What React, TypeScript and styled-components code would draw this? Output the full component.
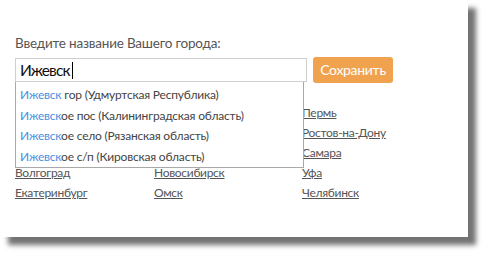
import React from "react";
import styled, { createGlobalStyle } from "styled-components";

const Global = createGlobalStyle`
  html, body { margin: 0; padding: 0; background: #fff; }
  body { font-family: "Lato", "Open Sans", Arial, sans-serif; min-height: 100vh; }
`;

const Card = styled.div`
  width: 468px;
  height: 237px;
  box-sizing: border-box;
  background: #fff;
  box-shadow: 8px 8px 5px rgba(0, 0, 0, 0.55);
  padding: 34px 15px 0 15px;
  display: flex;
  flex-direction: column;
`;

const Label = styled.div`
  font-size: 13.5px;
  letter-spacing: -0.2px;
  line-height: 18px;
  color: #555;
  margin-bottom: 6px;
`;

const FormRow = styled.div`
  display: flex;
  align-items: flex-start;
  gap: 6px;
`;

const Field = styled.div`
  position: relative;
  width: 292px;
`;

const Input = styled.div`
  box-sizing: border-box;
  height: 24px;
  border: 1px solid #cfcfcf;
  padding: 0 4px;
  font-size: 15.5px;
  letter-spacing: -0.9px;
  line-height: 22px;
  color: #111;
  display: flex;
  align-items: center;
`;

const Caret = styled.span`
  display: inline-block;
  width: 1px;
  height: 17px;
  background: #000;
  margin-left: 2px;
`;

const Menu = styled.ul`
  position: absolute;
  top: 24px;
  left: 0;
  width: 289px;
  box-sizing: border-box;
  margin: 0;
  padding: 3px 0 0 0;
  list-style: none;
  background: #fff;
  border: 1px solid #a9a9a9;
  border-top: none;
  z-index: 2;
`;

const MenuItem = styled.li`
  height: 20.5px;
  line-height: 20.5px;
  padding-left: 4px;
  font-size: 12px;
  letter-spacing: -0.2px;
  color: #444;
  white-space: nowrap;
`;

const Match = styled.span`
  color: #4a90e2;
`;

const SaveButton = styled.button`
  height: 26px;
  width: 80px;
  margin-top: -1px;
  padding: 0;
  border: none;
  border-radius: 3px;
  background: #f1a24f;
  color: #fff;
  font-family: inherit;
  font-size: 14px;
  letter-spacing: -0.3px;
  line-height: 26px;
  cursor: pointer;
`;

const Cities = styled.div`
  display: grid;
  grid-template-columns: 139px 148px auto;
  grid-auto-flow: column;
  grid-template-rows: repeat(5, 20px);
  margin-top: 20px;
`;

const CityLink = styled.a`
  font-size: 12px;
  letter-spacing: -0.3px;
  line-height: 20px;
  color: #555;
  text-decoration: underline;
  justify-self: start;
  white-space: nowrap;
`;

const Slot = styled.span``;

// Cells under the suggestion list are left empty; only visible cities are named.
const cities: (string | null)[] = [
  null,
  null,
  null,
  "Волгоград",
  "Екатеринбург",
  null,
  null,
  null,
  "Новосибирск",
  "Омск",
  "Пермь",
  "Ростов-на-Дону",
  "Самара",
  "Уфа",
  "Челябинск",
];

const suggestions = [
  { m: "Ижевск", rest: " гор (Удмуртская Республика)" },
  { m: "Ижевск", rest: "ое пос (Калининградская область)" },
  { m: "Ижевск", rest: "ое село (Рязанская область)" },
  { m: "Ижевск", rest: "ое с/п (Кировская область)" },
];

export default function App() {
  return (
    <>
      <Global />
      <Card>
        <Label>Введите название Вашего города:</Label>
        <FormRow>
          <Field>
            <Input>
              Ижевск
              <Caret />
            </Input>
            <Menu>
              {suggestions.map((s, i) => (
                <MenuItem key={i}>
                  <Match>{s.m}</Match>
                  {s.rest}
                </MenuItem>
              ))}
            </Menu>
          </Field>
          <SaveButton>Сохранить</SaveButton>
        </FormRow>
        <Cities>
          {cities.map((c, i) =>
            c ? (
              <CityLink key={i} href="#">
                {c}
              </CityLink>
            ) : (
              <Slot key={i} />
            )
          )}
        </Cities>
      </Card>
    </>
  );
}
